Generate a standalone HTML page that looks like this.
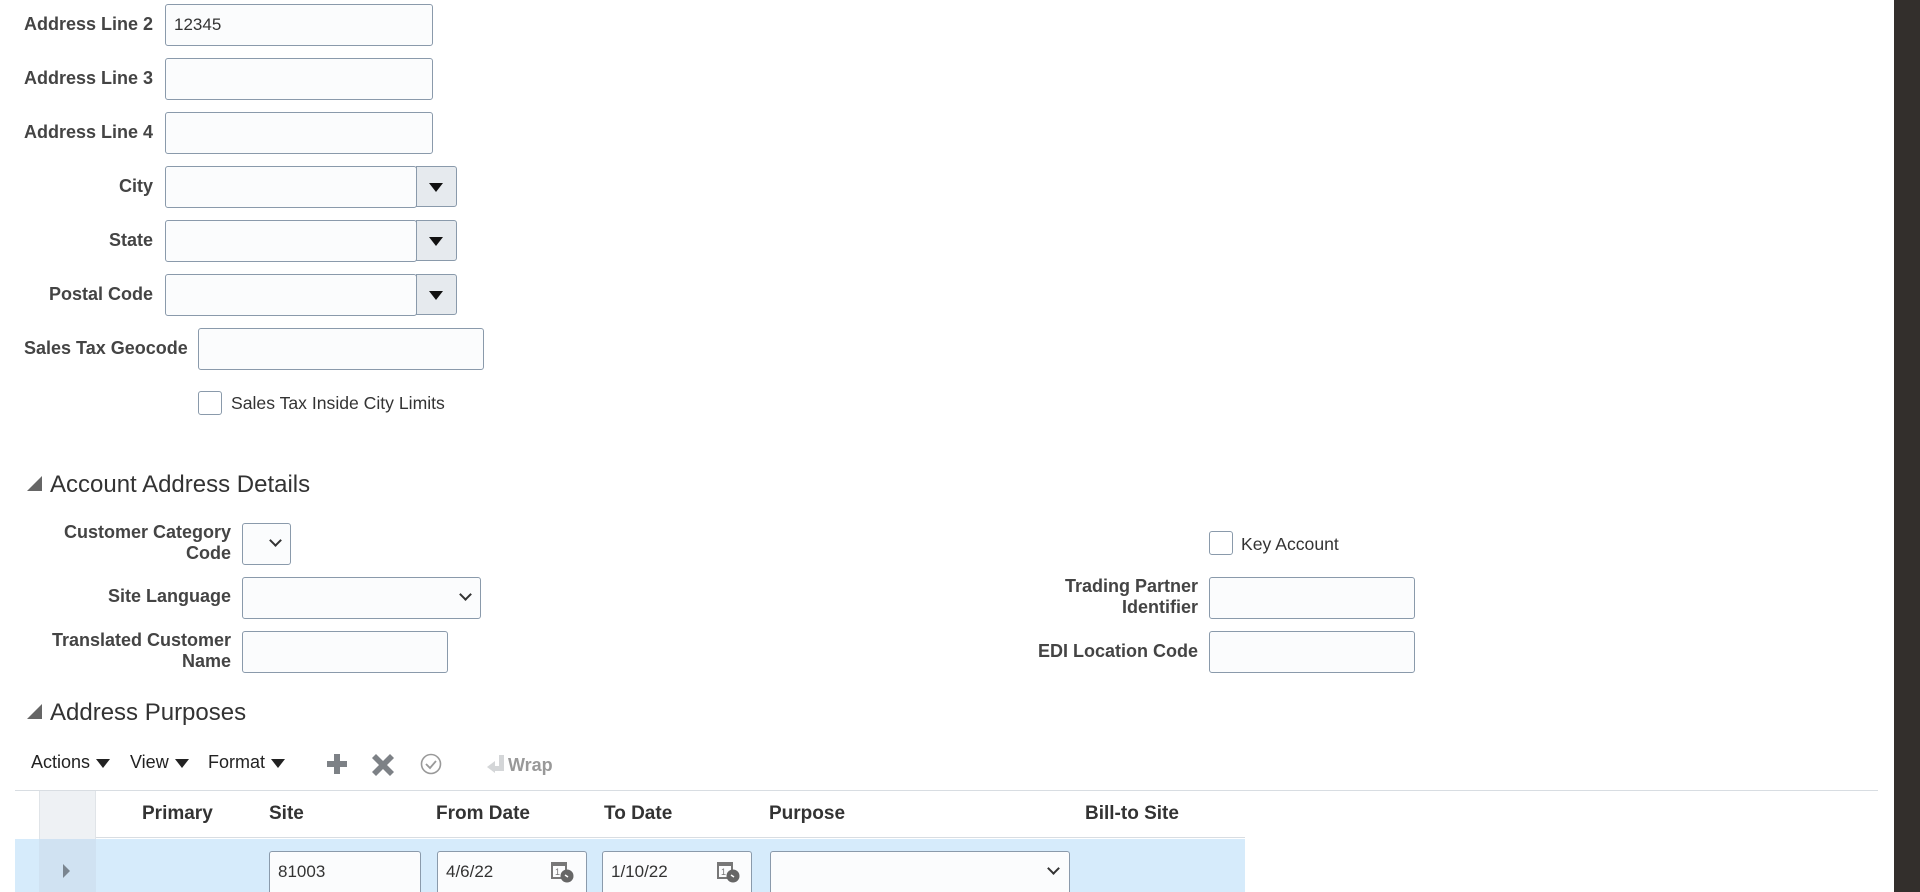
<!DOCTYPE html>
<html style="overflow:hidden;height:892px"><head><meta charset="utf-8"><style>
*{box-sizing:border-box;margin:0;padding:0}
body{width:1920px;height:892px;overflow:hidden;background:#fff;font-family:"Liberation Sans",sans-serif;color:#333;position:relative}
.a{position:absolute}
.lb{position:absolute;font-weight:bold;font-size:18px;color:#444;text-align:right;line-height:21px}
.in{position:absolute;border:1px solid #8a9aab;border-radius:3px;background:#fbfcfd;font-size:17px;color:#333;padding-left:8px;line-height:39px}
.btn{position:absolute;border:1px solid #8a9aab;border-radius:0 3px 3px 0;background:#e6eaee}
.btn:after{content:"";position:absolute;left:12px;top:16px;border-left:7px solid transparent;border-right:7px solid transparent;border-top:9px solid #111}
.cb{position:absolute;width:24px;height:24px;border:1px solid #8a9aab;border-radius:3px;background:#fff}
.h{position:absolute;font-size:24px;color:#333}
.tri{position:absolute;width:0;height:0;border-left:15px solid transparent;border-bottom:15px solid #666}
.th{position:absolute;top:803px;font-weight:bold;font-size:19px;color:#333}
.chev{position:absolute;width:9px;height:9px;border-right:2px solid #333;border-bottom:2px solid #333;transform:rotate(45deg)}
.tb{position:absolute;top:752px;font-size:18px;color:#222}
.dd{display:inline-block;width:0;height:0;border-left:7px solid transparent;border-right:7px solid transparent;border-top:9px solid #222;margin-left:6px;vertical-align:middle}
.cut{height:41px;border-bottom:none;border-radius:3px 3px 0 0}
</style></head><body>
<div class="lb" style="left:0;width:153px;top:14px">Address Line 2</div>
<div class="in" style="left:165px;top:4px;width:268px;height:42px">12345</div>
<div class="lb" style="left:0;width:153px;top:68px">Address Line 3</div>
<div class="in" style="left:165px;top:58px;width:268px;height:42px"></div>
<div class="lb" style="left:0;width:153px;top:122px">Address Line 4</div>
<div class="in" style="left:165px;top:112px;width:268px;height:42px"></div>
<div class="lb" style="left:0;width:153px;top:176px">City</div>
<div class="in" style="left:165px;top:166px;width:252px;height:42px"></div><div class="btn" style="left:416px;top:166px;width:41px;height:41px"></div>
<div class="lb" style="left:0;width:153px;top:230px">State</div>
<div class="in" style="left:165px;top:220px;width:252px;height:42px"></div><div class="btn" style="left:416px;top:220px;width:41px;height:41px"></div>
<div class="lb" style="left:0;width:153px;top:284px">Postal Code</div>
<div class="in" style="left:165px;top:274px;width:252px;height:42px"></div><div class="btn" style="left:416px;top:274px;width:41px;height:41px"></div>
<div class="lb" style="left:24px;top:338px;text-align:left">Sales Tax Geocode</div>
<div class="in" style="left:198px;top:328px;width:286px;height:42px"></div>
<div class="cb" style="left:198px;top:391px"></div>
<div class="a" style="left:231px;top:392px;font-size:17.6px;line-height:22px;color:#333">Sales Tax Inside City Limits</div>

<div class="tri" style="left:27px;top:476px"></div>
<div class="h" style="left:50px;top:471px">Account Address Details</div>
<div class="lb" style="left:0;width:231px;top:522px">Customer Category<br>Code</div>
<div class="in" style="left:242px;top:523px;width:49px;height:42px"></div><div class="chev" style="left:271px;top:536px"></div>
<div class="lb" style="left:0;width:231px;top:586px">Site Language</div>
<div class="in" style="left:242px;top:577px;width:239px;height:42px"></div><div class="chev" style="left:461px;top:590px"></div>
<div class="lb" style="left:0;width:231px;top:630px">Translated Customer<br>Name</div>
<div class="in" style="left:242px;top:631px;width:206px;height:42px"></div>
<div class="cb" style="left:1209px;top:531px"></div>
<div class="a" style="left:1241px;top:533px;font-size:17.6px;line-height:22px">Key Account</div>
<div class="lb" style="left:900px;width:298px;top:576px">Trading Partner<br>Identifier</div>
<div class="in" style="left:1209px;top:577px;width:206px;height:42px"></div>
<div class="lb" style="left:900px;width:298px;top:641px">EDI Location Code</div>
<div class="in" style="left:1209px;top:631px;width:206px;height:42px"></div>

<div class="tri" style="left:27px;top:704px"></div>
<div class="h" style="left:50px;top:699px">Address Purposes</div>
<div class="tb" style="left:31px">Actions<span class="dd"></span></div>
<div class="tb" style="left:130px">View<span class="dd"></span></div>
<div class="tb" style="left:208px">Format<span class="dd"></span></div>
<svg class="a" style="left:324px;top:750px" width="260" height="28">
<path d="M10 4h6v7h7v6h-7v7h-6v-7h-7v-6h7z" fill="#7d8186"/>
<path d="M52 4l7 7 7-7 4 4-7 7 7 7-4 4-7-7-7 7-4-4 7-7-7-7z" fill="#7d8186"/>
<circle cx="107" cy="14" r="9.5" fill="none" stroke="#999" stroke-width="1.6"/>
<path d="M102 14l4 4 6-7" fill="none" stroke="#999" stroke-width="1.8"/>
<path d="M175 5h5v16h-5z M163 17l8-6v12z M168 16h10v5h-10z" fill="#d4d6d8"/>
<text x="184" y="21" font-family="Liberation Sans" font-weight="bold" font-size="18" fill="#999">Wrap</text>
</svg>
<div class="a" style="left:15px;top:790px;width:1863px;height:1px;background:#d8dde2"></div>
<div class="a" style="left:39px;top:791px;width:57px;height:101px;background:#eef1f4;border-left:1px solid #e0e4e8;border-right:1px solid #e0e4e8"></div>
<div class="a" style="left:96px;top:791px;width:1149px;height:47px;border-bottom:1px solid #d8dde2"></div>
<div class="th" style="left:142px">Primary</div>
<div class="th" style="left:269px">Site</div>
<div class="th" style="left:436px">From Date</div>
<div class="th" style="left:604px">To Date</div>
<div class="th" style="left:769px">Purpose</div>
<div class="th" style="left:1085px">Bill-to Site</div>
<div class="a" style="left:15px;top:839px;width:1230px;height:53px;background:#d6ebfb"></div>
<div class="a" style="left:39px;top:839px;width:57px;height:53px;background:#d0e2f2"></div>
<div class="a" style="left:63px;top:864px;border-top:7px solid transparent;border-bottom:7px solid transparent;border-left:7px solid #7a8590"></div>
<div class="in cut" style="left:269px;top:851px;width:152px;line-height:40px">81003</div>
<div class="in cut" style="left:437px;top:851px;width:150px;line-height:40px">4/6/22</div>
<div class="in cut" style="left:602px;top:851px;width:150px;line-height:40px">1/10/22</div>
<div class="in cut" style="left:770px;top:851px;width:300px"></div><div class="chev" style="left:1049px;top:864px"></div>
<svg class="a" style="left:551px;top:860px" width="24" height="24"><rect x="1" y="3" width="14" height="15" fill="none" stroke="#777" stroke-width="2"/><rect x="1" y="2" width="14" height="4" fill="#777"/><text x="4" y="15" font-size="9" fill="#777" font-family="Liberation Sans">1</text><circle cx="16" cy="16" r="6.5" fill="#666"/><path d="M14 15l3 2" stroke="#fff" stroke-width="1.5"/></svg>
<svg class="a" style="left:717px;top:860px" width="24" height="24"><rect x="1" y="3" width="14" height="15" fill="none" stroke="#777" stroke-width="2"/><rect x="1" y="2" width="14" height="4" fill="#777"/><text x="4" y="15" font-size="9" fill="#777" font-family="Liberation Sans">1</text><circle cx="16" cy="16" r="6.5" fill="#666"/><path d="M14 15l3 2" stroke="#fff" stroke-width="1.5"/></svg>
<div class="a" style="left:1894px;top:0;width:26px;height:892px;background:#332f2c"></div>
</body></html>
